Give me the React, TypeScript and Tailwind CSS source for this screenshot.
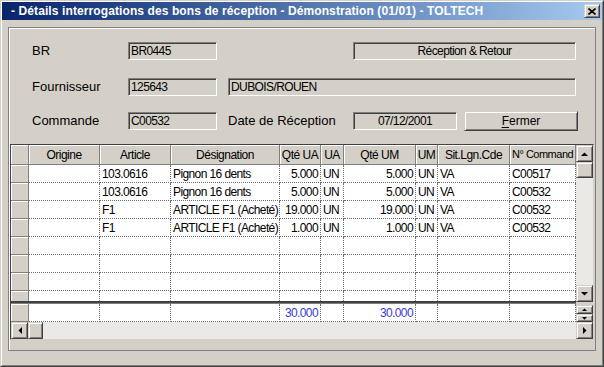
import React from "react";

const FIELD =
  "flex h-[18px] items-center overflow-hidden whitespace-nowrap border border-t-[#808080] border-l-[#808080] border-r-white border-b-white bg-[#d4d0c8] shadow-[inset_1px_1px_0_#404040] text-[12px] tracking-[-0.6px] text-black";
const RAISED =
  "border border-t-[#d4d0c8] border-l-[#d4d0c8] border-r-[#404040] border-b-[#404040] bg-[#d4d0c8] shadow-[inset_1px_1px_0_#fff,inset_-1px_-1px_0_#808080]";
const HEAD =
  "flex h-[20px] shrink-0 items-center overflow-hidden whitespace-nowrap border-r border-b border-[#808080] bg-[#d4d0c8] shadow-[inset_1px_1px_0_#fff] text-black";
const CELL =
  "flex h-[18px] shrink-0 items-center overflow-hidden whitespace-nowrap border-r border-b border-dotted border-[#6e6e6e] bg-white px-[2px] text-[12px] tracking-[-0.6px]";
const IND =
  "h-[18px] w-[18px] shrink-0 border-r border-b border-[#808080] bg-[#d4d0c8] shadow-[inset_1px_1px_0_#fff]";

const HEAD_TEXT = "justify-center text-[12px] tracking-[-0.5px]";

const cols = [
  { label: "Origine", w: "w-[71px]", right: false, head: HEAD_TEXT },
  { label: "Article", w: "w-[71px]", right: false, head: HEAD_TEXT },
  { label: "Désignation", w: "w-[109px]", right: false, head: HEAD_TEXT },
  { label: "Qté UA", w: "w-[41px]", right: true, head: HEAD_TEXT },
  { label: "UA", w: "w-[23px]", right: false, head: HEAD_TEXT },
  { label: "Qté UM", w: "w-[72px]", right: true, head: HEAD_TEXT },
  { label: "UM", w: "w-[22px]", right: false, head: HEAD_TEXT },
  { label: "Sit.Lgn.Cde", w: "w-[72px]", right: false, head: HEAD_TEXT },
  { label: "N° Command", w: "w-[66px]", right: false, head: "justify-start pl-[2px] text-[11px] tracking-[-0.5px]" },
];

const rows = [
  ["", "103.0616", "Pignon 16 dents", "5.000", "UN", "5.000", "UN", "VA", "C00517"],
  ["", "103.0616", "Pignon 16 dents", "5.000", "UN", "5.000", "UN", "VA", "C00532"],
  ["", "F1", "ARTICLE F1 (Acheté)", "19.000", "UN", "19.000", "UN", "VA", "C00532"],
  ["", "F1", "ARTICLE F1 (Acheté)", "1.000", "UN", "1.000", "UN", "VA", "C00532"],
  ["", "", "", "", "", "", "", "", ""],
  ["", "", "", "", "", "", "", "", ""],
  ["", "", "", "", "", "", "", "", ""],
  ["", "", "", "", "", "", "", "", ""],
];

const totals = ["", "", "", "30.000", "", "30.000", "", "", ""];

function Arrow({ dir, small }: { dir: "up" | "down" | "left" | "right"; small?: boolean }) {
  const pts = {
    up: "0,4 7,4 3.5,0.5",
    down: "0,0 7,0 3.5,3.5",
    left: "4,0 4,7 0.5,3.5",
    right: "0,0 0,7 3.5,3.5",
  }[dir];
  const horiz = dir === "left" || dir === "right";
  const w = horiz ? 4 : 7;
  const h = horiz ? 7 : 4;
  return (
    <svg width={small ? w - 2 : w} height={small ? h - 1 : h} viewBox={`0 0 ${w} ${h}`} preserveAspectRatio="none">
      <polygon points={pts} fill="#000" />
    </svg>
  );
}

function ScrollBtn({ dir, className = "" }: { dir: "up" | "down" | "left" | "right"; className?: string }) {
  return (
    <div className={`flex h-[17px] w-[17px] shrink-0 items-center justify-center ${RAISED} ${className}`}>
      <Arrow dir={dir} />
    </div>
  );
}

export default function App() {
  return (
    <div className="h-[367px] w-[604px] overflow-hidden border border-t-[#d4d0c8] border-l-[#d4d0c8] border-r-[#404040] border-b-[#404040] bg-[#d4d0c8] font-['Liberation_Sans',Arial,sans-serif] text-black">
      <div className="flex h-full flex-col border border-t-white border-l-white border-r-[#808080] border-b-[#808080]">
        {/* title bar */}
        <div className="flex h-[18px] shrink-0 items-center justify-between bg-linear-to-r from-[#0a246a] to-[#a6caf0] pl-[9px] pr-[2px]">
          <span className="text-[12px] font-bold tracking-[0.1px] text-white">
            - Détails interrogations des bons de réception - Démonstration (01/01) - TOLTECH
          </span>
          <div className={`flex h-[14px] w-[16px] items-center justify-center ${RAISED}`}>
            <svg width="8" height="7" viewBox="0 0 8 7">
              <path d="M0.5 0.5 L7.5 6.5 M7.5 0.5 L0.5 6.5" stroke="#000" strokeWidth="1.6" />
            </svg>
          </div>
        </div>

        {/* main panel */}
        <div className="mx-[6px] mt-[7px] flex flex-col border border-[#808080] pb-[10px] shadow-[inset_1px_1px_0_#fff]">
          <div className="mt-[14px] flex h-[18px] items-center pl-[23px]">
            <span className="w-[96px] text-[13px]">BR</span>
            <div className={`${FIELD} w-[89px] pl-[2px]`}>BR0445</div>
            <div className={`${FIELD} ml-[136px] w-[223px] justify-center`}>Réception &amp; Retour</div>
          </div>
          <div className="mt-[18px] flex h-[18px] items-center pl-[23px]">
            <span className="w-[96px] text-[13px]">Fournisseur</span>
            <div className={`${FIELD} w-[89px] pl-[2px]`}>125643</div>
            <div className={`${FIELD} ml-[11px] w-[348px] pl-[2px]`}>DUBOIS/ROUEN</div>
          </div>
          <div className="mt-[15px] flex h-[20px] items-center pl-[23px]">
            <span className="w-[96px] text-[13px]">Commande</span>
            <div className={`${FIELD} w-[89px] pl-[2px]`}>C00532</div>
            <span className="ml-[11px] w-[125px] text-[13px]">Date de Réception</span>
            <div className={`${FIELD} w-[104px] justify-center`}>07/12/2001</div>
            <button
              type="button"
              className={`ml-[7px] flex h-[20px] w-[114px] items-center justify-center text-[12px] ${RAISED}`}
            >
              <span className="underline decoration-1 underline-offset-2">F</span>ermer
            </button>
          </div>

          {/* grid */}
          <div className="mx-px mt-[13px] flex flex-col border border-t-[#404040] border-l-[#404040] border-r-[#d4d0c8] border-b-[#d4d0c8]">
            <div className="flex">
              <div className="flex w-[565px] flex-col">
                <div className="flex">
                  <div className={`${HEAD} w-[18px]`} />
                  {cols.map((c) => (
                    <div key={c.label} className={`${HEAD} ${c.w} ${c.head}`}>
                      {c.label}
                    </div>
                  ))}
                </div>
                <div className="h-[136px] overflow-hidden">
                  {rows.map((r, i) => (
                    <div key={i} className="flex">
                      <div className={IND} />
                      {r.map((v, j) => (
                        <div key={j} className={`${CELL} ${cols[j].w} ${cols[j].right ? "justify-end" : ""}`}>
                          {v}
                        </div>
                      ))}
                    </div>
                  ))}
                </div>
                <div className="h-[3px] border-t-2 border-b border-t-[#404040] border-b-[#808080] bg-[#d4d0c8]" />
                <div className="flex">
                  <div className={`${IND} h-[17px]`} />
                  {totals.map((v, j) => (
                    <div
                      key={j}
                      className={`${CELL} h-[17px] ${cols[j].w} justify-end text-[#3a3ad6]`}
                    >
                      {v}
                    </div>
                  ))}
                </div>
              </div>

              {/* vertical scrollbar */}
              <div className="flex w-[17px] flex-col">
                <ScrollBtn dir="up" />
                <div className={`h-[16px] w-[17px] ${RAISED}`} />
                <div className="w-[17px] flex-1 bg-[#ebe9e5]" />
                <ScrollBtn dir="down" />
                <div className="h-[3px] bg-[#d4d0c8]" />
                <div className={`flex h-[9px] w-[17px] items-center justify-center ${RAISED}`}>
                  <Arrow dir="up" small />
                </div>
                <div className={`flex h-[8px] w-[17px] items-center justify-center ${RAISED}`}>
                  <Arrow dir="down" small />
                </div>
              </div>
            </div>

            {/* horizontal scrollbar */}
            <div className="flex h-[17px]">
              <ScrollBtn dir="left" />
              <div className={`h-[17px] w-[15px] ${RAISED}`} />
              <div className="flex-1 bg-[#ebe9e5]" />
              <ScrollBtn dir="right" />
            </div>
          </div>
        </div>
      </div>
    </div>
  );
}
